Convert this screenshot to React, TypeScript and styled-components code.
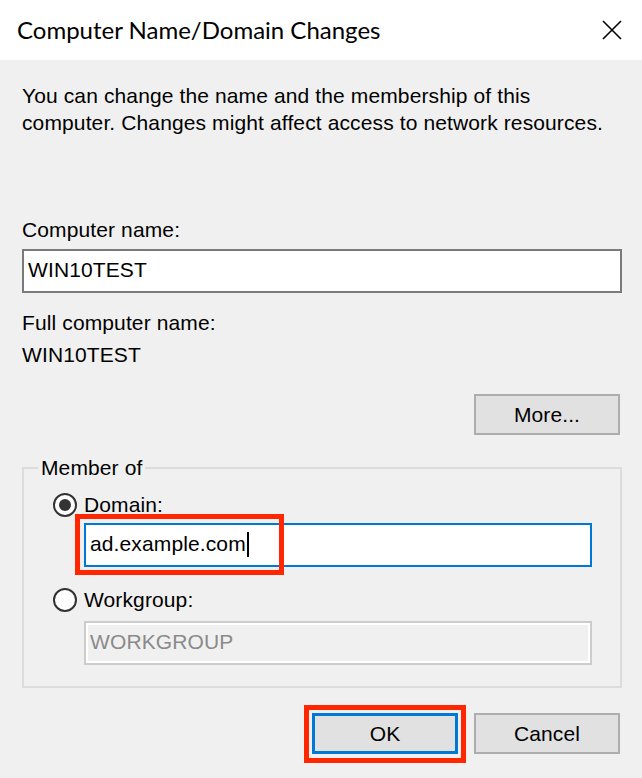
import React from "react";
import styled, { createGlobalStyle, css } from "styled-components";

const Global = createGlobalStyle`
  html, body { margin: 0; padding: 0; background: #f0f0f0; }
  body { font-family: "Liberation Sans", Arial, sans-serif; color: #000; }
  * { box-sizing: border-box; }
`;

const Dialog = styled.div`
  width: 642px;
  height: 778px;
  background: #f0f0f0;
  display: flex;
  flex-direction: column;
  overflow: hidden;
`;

const TitleBar = styled.div`
  height: 60px;
  flex: none;
  background: #ffffff;
  display: flex;
  align-items: center;
  justify-content: space-between;
  padding: 0 20px 2px 17px;
`;

const Title = styled.span`
  font-family: Lato, "Noto Sans", sans-serif;
  font-size: 24px;
  color: #000;
`;

const CloseButton = styled.span`
  width: 20px;
  height: 20px;
  display: block;
  margin-top: 1px;
  svg { display: block; }
`;

const Body = styled.div`
  display: flex;
  flex-direction: column;
  padding: 0 20px 0 22px;
  letter-spacing: 0.12px;
`;

const Text = styled.p<{ $mt?: number }>`
  margin: ${(p) => p.$mt ?? 0}px 0 0 0;
  font-size: 21px;
  line-height: 27px;
  color: #000;
`;

type BoxVariant = "normal" | "focused" | "disabled";

const TextBox = styled.div<{ $variant: BoxVariant; $mt?: number }>`
  position: relative;
  margin-top: ${(p) => p.$mt ?? 0}px;
  height: 44px;
  display: flex;
  align-items: center;
  padding: 0 4px 4px 4px;
  font-size: 21px;
  line-height: 27px;
  background: #fff;
  color: #000;
  border: 2px solid #7a7a7a;
  ${(p) =>
    p.$variant === "focused" &&
    css`
      border-color: #0078d7;
    `}
  ${(p) =>
    p.$variant === "disabled" &&
    css`
      border-color: #cccccc;
      background: #f0f0f0;
      box-shadow: inset 0 0 0 2px #ffffff;
      color: #8a8a8a;
    `}
`;

const Caret = styled.span`
  display: inline-block;
  width: 2px;
  height: 25px;
  background: #000;
  margin-left: 1px;
  margin-top: 3px;
`;

const Annotation = styled.span<{ $l: number; $t: number; $w: number; $h: number }>`
  position: absolute;
  left: ${(p) => p.$l}px;
  top: ${(p) => p.$t}px;
  width: ${(p) => p.$w}px;
  height: ${(p) => p.$h}px;
  border: 5px solid #ff2600;
  pointer-events: none;
`;

const ButtonRow = styled.div<{ $mt: number }>`
  display: flex;
  justify-content: flex-end;
  gap: 16px;
  margin-top: ${(p) => p.$mt}px;
  padding-right: 2px;
`;

const Button = styled.button<{ $primary?: boolean }>`
  position: relative;
  width: 146px;
  height: 41px;
  padding: 0;
  font-family: "Liberation Sans", Arial, sans-serif;
  font-size: 21px;
  letter-spacing: 0.12px;
  color: #000;
  background: #e1e1e1;
  border: 2px solid #adadad;
  ${(p) =>
    p.$primary &&
    css`
      border: 3px solid #0078d7;
    `}
`;

const Group = styled.fieldset`
  margin: 20px 0 0 0;
  min-width: 0;
  border: 2px solid #dcdcdc;
  padding: 10px 28px 21px 29px;
  display: flex;
  flex-direction: column;
`;

const Legend = styled.legend`
  font-size: 21px;
  line-height: 26px;
  padding: 0 3px;
  margin-left: -15px;
`;

const RadioRow = styled.label<{ $mt?: number }>`
  display: flex;
  align-items: center;
  gap: 7px;
  height: 27px;
  margin-top: ${(p) => p.$mt ?? 0}px;
  font-size: 21px;
  line-height: 27px;
`;

const Radio = styled.span<{ $checked?: boolean }>`
  width: 24px;
  height: 24px;
  border-radius: 50%;
  border: 2px solid #333;
  background: #fff;
  display: grid;
  place-items: center;
  flex: none;
  &::after {
    content: "";
    width: 12px;
    height: 12px;
    border-radius: 50%;
    background: ${(p) => (p.$checked ? "#333" : "transparent")};
  }
`;

const Indented = styled.div<{ $mt: number }>`
  margin: ${(p) => p.$mt}px 0 0 31px;
`;

export default function App() {
  return (
    <>
      <Global />
      <Dialog>
        <TitleBar>
          <Title>Computer Name/Domain Changes</Title>
          <CloseButton>
            <svg width="20" height="20" viewBox="0 0 20 20">
              <path d="M1 1 L19 19 M19 1 L1 19" stroke="#000" strokeWidth="1.6" fill="none" />
            </svg>
          </CloseButton>
        </TitleBar>
        <Body>
          <Text $mt={22}>
            You can change the name and the membership of this
            <br />
            computer. Changes might affect access to network resources.
          </Text>
          <Text $mt={80}>Computer name:</Text>
          <TextBox $variant="normal" $mt={6}>WIN10TEST</TextBox>
          <Text $mt={16}>Full computer name:</Text>
          <Text $mt={5}>WIN10TEST</Text>
          <ButtonRow $mt={26}>
            <Button>More...</Button>
          </ButtonRow>
          <Group>
            <Legend>Member of</Legend>
            <RadioRow>
              <Radio $checked />
              Domain:
            </RadioRow>
            <Indented $mt={5}>
              <TextBox $variant="focused">
                ad.example.com
                <Caret />
                <Annotation $l={-11} $t={-11} $w={209} $h={61} />
              </TextBox>
            </Indented>
            <RadioRow $mt={19}>
              <Radio />
              Workgroup:
            </RadioRow>
            <Indented $mt={8}>
              <TextBox $variant="disabled">WORKGROUP</TextBox>
            </Indented>
          </Group>
          <ButtonRow $mt={25}>
            <Button $primary>
              OK
              <Annotation $l={-11} $t={-11} $w={162} $h={58} />
            </Button>
            <Button>Cancel</Button>
          </ButtonRow>
        </Body>
      </Dialog>
    </>
  );
}
